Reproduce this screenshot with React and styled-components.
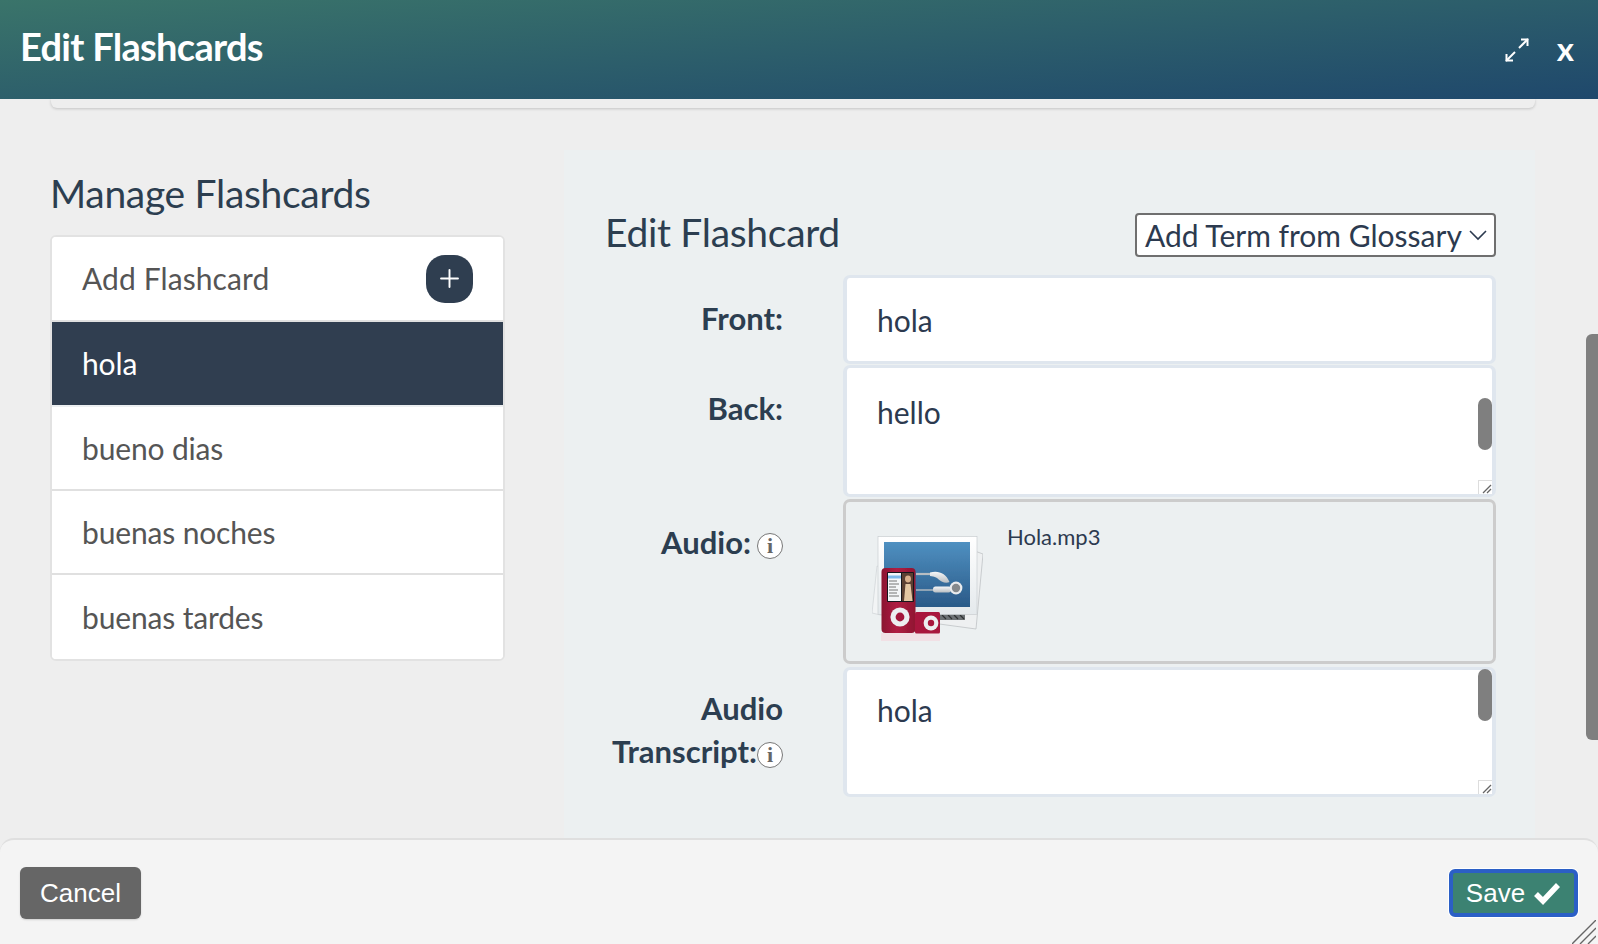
import styled, { createGlobalStyle } from 'styled-components';
import { Plus } from 'lucide-react';

const GlobalStyle = createGlobalStyle`
  html, body {
    margin: 0;
    height: 100%;
    overflow: hidden;
    background: #eeeeee;
    font-family: Lato, "Liberation Sans", sans-serif;
    color: #2c3a4f;
  }
  #root { height: 100%; }
  * { box-sizing: border-box; }
`;

const Modal = styled.div`
  position: relative;
  height: 100vh;
  display: flex;
  flex-direction: column;
  background: #eeeeee;
  overflow: hidden;
`;

const Header = styled.header`
  flex: 0 0 99px;
  display: flex;
  align-items: flex-start;
  justify-content: space-between;
  padding: 24px 24px 0 20px;
  background: linear-gradient(176deg, #3a746a 0%, #1f486c 100%);
  color: #fff;
`;

const Title = styled.h1`
  margin: 0;
  font-size: 38px;
  line-height: 44px;
  font-weight: 700;
  letter-spacing: -0.7px;
`;

const HeaderActions = styled.div`
  display: flex;
  align-items: flex-start;
  gap: 28px;
  padding-top: 14px;
`;

const CloseMark = styled.span`
  margin-top: -3px;
  font-size: 33px;
  font-weight: 700;
  line-height: 26px;
`;

const Body = styled.main`
  flex: 1;
  min-height: 0;
  overflow: hidden;
  padding: 0 63px 0 50px;
`;

const CardEdge = styled.div`
  height: 9px;
  margin-left: 1px;
  background: #eeeeee;
  border-radius: 0 0 6px 6px;
  box-shadow: 0 1px 3px rgba(0, 0, 0, 0.18);
`;

const Columns = styled.div`
  display: flex;
  align-items: flex-start;
  gap: 59px;
  margin-top: 42px;
`;

const LeftColumn = styled.section`
  flex: 0 0 455px;
`;

const SectionHeading = styled.h2`
  margin: 0;
  font-size: 39px;
  line-height: 45px;
  font-weight: 400;
  letter-spacing: -0.3px;
  color: #2c3e50;
`;

const ManageHeading = styled(SectionHeading)`
  margin: 21px 0 19px;
`;

const List = styled.ul`
  margin: 0;
  padding: 0;
  list-style: none;
  background: #fff;
  border: 2px solid #e2e2e2;
  border-radius: 6px;
  overflow: hidden;
`;

const Item = styled.li`
  height: ${p => p.$h}px;
  display: flex;
  align-items: center;
  justify-content: space-between;
  padding: 0 29px 0 30px;
  font-size: 30px;
  letter-spacing: -0.15px;
  color: #555;
  background: #fff;
  background-clip: padding-box;
  border-bottom: 2px solid #e0e0e0;

  &:last-child { border-bottom: 0; }
`;

const AddItem = styled(Item)`
  padding: 0 30px 2px 30px;
  letter-spacing: 0.1px;
`;

const ActiveItem = styled(Item)`
  padding-bottom: 2px;
  color: #fff;
  background: #303e50;
  border-bottom-color: #eceff1;
`;

const AddButton = styled.button`
  width: 47px;
  height: 48px;
  margin-top: 2px;
  border: 0;
  padding: 0;
  border-radius: 19px;
  display: flex;
  align-items: center;
  justify-content: center;
  background: #2f3e50;
  color: #fff;
`;

const EditPanel = styled.section`
  flex: 1;
  height: 700px;
  padding: 58px 39px 0 41px;
  background: #ecf0f1;
`;

const EditTop = styled.div`
  display: flex;
  align-items: center;
  justify-content: space-between;
  height: 48px;
  margin-bottom: 19px;
`;

const GlossarySelect = styled.div`
  width: 361px;
  height: 44px;
  margin-top: 6px;
  display: flex;
  align-items: center;
  justify-content: space-between;
  padding: 0 7px 0 8px;
  background: #fff;
  border: 2px solid #6f6f6f;
  border-radius: 4px;
  font-size: 30px;
  color: #2c3a4f;
  white-space: nowrap;
`;

const Row = styled.div`
  display: flex;
  gap: 60px;
  margin-top: ${p => p.$mt || 0}px;
`;

const Label = styled.div`
  flex: 0 0 178px;
  padding-top: ${p => p.$pt}px;
  text-align: right;
  font-size: 31px;
  line-height: 43px;
  font-weight: 700;
  color: #2c3e50;
`;

const LabelLine = styled.div`
  display: flex;
  align-items: center;
  justify-content: flex-end;
  gap: ${p => p.$gap || 0}px;
  white-space: nowrap;
`;

const InfoBadge = styled.span`
  flex: 0 0 26px;
  width: 26px;
  height: 26px;
  margin-top: 6px;
  display: inline-flex;
  align-items: center;
  justify-content: center;
  border: 1px solid #777;
  border-radius: 50%;
  background: #fff;
  font-family: "Liberation Serif", serif;
  font-size: 22px;
  font-weight: 700;
  line-height: 1;
  color: #666;
`;

const Field = styled.div`
  position: relative;
  flex: 1;
  height: ${p => p.$h}px;
  padding: ${p => p.$pt}px 30px 0;
  background: #fff;
  border: solid #dfe6ee;
  border-width: 3px 4px;
  border-radius: 7px;
  font-size: 30px;
  line-height: 44px;
  color: #2c3a4f;
`;

const ScrollThumb = styled.div`
  position: absolute;
  top: ${p => p.$top}px;
  right: 0;
  width: 14px;
  height: 52px;
  border-radius: 7px;
  background: #7f7f7f;
`;

const Resizer = styled.div`
  position: absolute;
  right: 0;
  bottom: 0;
  width: 14px;
  height: 14px;
  background: #fff;
  border: 1px solid #dddddd;
  border-width: 1px 0 0 1px;
  color: #666;
  display: flex;
`;

const AudioBox = styled.div`
  flex: 1;
  height: 165px;
  display: flex;
  align-items: flex-start;
  gap: 24px;
  padding: 21px 0 0 26px;
  background: #ecf0f1;
  border: 3px solid #cccccc;
  border-radius: 7px;
`;

const ArtSvg = styled.svg`
  flex: none;
  margin-top: 13px;
`;

const FileName = styled.span`
  font-size: 22px;
  line-height: 28px;
  color: #2c3a4f;
`;

const Footer = styled.footer`
  flex: 0 0 106px;
  display: flex;
  align-items: flex-start;
  justify-content: space-between;
  padding: 27px 20px 0 20px;
  background: #f4f4f4;
  border-top: 2px solid #dfdfdf;
  border-radius: 14px 14px 0 0;
`;

const CancelButton = styled.button`
  display: flex;
  align-items: center;
  justify-content: center;
  height: 52px;
  width: 121px;
  padding: 0;
  border: 0;
  border-radius: 6px;
  background: #666666;
  box-shadow: 0 1px 2px rgba(0, 0, 0, 0.15);
  color: #fff;
  font-family: "Liberation Sans", Arial, sans-serif;
  font-size: 26px;
`;

const SaveButton = styled(CancelButton)`
  gap: 8px;
  height: 48px;
  width: 129px;
  margin-top: 2px;
  border: 4px solid #2b5fc6;
  background: #3c8272;
  box-shadow: 0 0 0 1px #fff;
`;

const PageThumb = styled.div`
  position: absolute;
  top: 334px;
  right: 0;
  width: 12px;
  height: 406px;
  border-radius: 6px 0 0 6px;
  background: #7f7f7f;
`;

const GripLines = styled.svg`
  position: absolute;
  right: 2px;
  bottom: 0;
`;

const ExpandIcon = () => (
  <svg width="24" height="24" viewBox="0 0 24 24" fill="none" stroke="#fff" strokeWidth="2">
    <path d="M14 10 L23 1" />
    <path d="M16 1.5 H22.5 V8" />
    <path d="M10 14 L1 23" />
    <path d="M1.5 16 V22.5 H8" />
  </svg>
);

const Chevron = () => (
  <svg width="18" height="12" viewBox="0 0 18 12" fill="none" stroke="#2c3a4f" strokeWidth="1.6">
    <path d="M1 2 L9 10 L17 2" />
  </svg>
);

const ResizeMark = () => (
  <svg width="13" height="13" viewBox="0 0 13 13" fill="none" stroke="#666" strokeWidth="1.2">
    <path d="M4 12 L12 4" />
    <path d="M8 12 L12 8" />
  </svg>
);

const CheckMark = () => (
  <svg width="28" height="24" viewBox="0 0 28 24" fill="none" stroke="#fff" strokeWidth="5.5">
    <path d="M3 13 L10 20 L25 4" />
  </svg>
);

const AudioArt = () => (
  <ArtSvg width="111" height="105" viewBox="0 0 111 105">
    <defs>
      <linearGradient id="sky" x1="0" y1="0" x2="0" y2="1">
        <stop offset="0" stopColor="#4f90c1" />
        <stop offset="1" stopColor="#2a5a88" />
      </linearGradient>
      <linearGradient id="frame" x1="0" y1="0" x2="0" y2="1">
        <stop offset="0" stopColor="#ffffff" />
        <stop offset="1" stopColor="#e4e9ec" />
      </linearGradient>
      <linearGradient id="red" x1="0" y1="0" x2="1" y2="0">
        <stop offset="0" stopColor="#8a1230" />
        <stop offset="0.45" stopColor="#b01f44" />
        <stop offset="1" stopColor="#8f1431" />
      </linearGradient>
      <linearGradient id="bud" x1="0" y1="0" x2="0" y2="1">
        <stop offset="0" stopColor="#f6f7f8" />
        <stop offset="1" stopColor="#b9bec2" />
      </linearGradient>
      <filter id="soft">
        <feGaussianBlur stdDeviation="0.35" />
      </filter>
    </defs>
    <g filter="url(#soft)">
      <path d="M5 30 L0 77 L30 84 L30 40 Z" fill="#f2f4f5" stroke="#cfd3d5" strokeWidth="0.7" />
      <path d="M100 14 L111 18 L104 93 L60 87 L60 70 Z" fill="#eef0f1" stroke="#bfc3c5" strokeWidth="0.8" />
      <rect x="68" y="78" width="25" height="6" fill="#6d7275" />
      <path d="M70 79 L74 83 M76 79 L80 83 M82 79 L86 83 M88 79 L92 83" stroke="#2d3133" strokeWidth="1.2" />
      <rect x="6" y="0.5" width="99" height="78" fill="url(#frame)" stroke="#c9ced1" strokeWidth="0.7" />
      <rect x="12" y="6" width="86" height="65" fill="url(#sky)" />
      <path d="M44 38 H62" stroke="#b8bdc2" strokeWidth="2.2" />
      <path d="M58 36.5 C66 34 74 37 77.5 46 C74 48 69 46 65 42 C62 40 60 40.5 58 40 Z" fill="url(#bud)" />
      <path d="M44 54 H62" stroke="#b8bdc2" strokeWidth="1.4" />
      <rect x="61" y="50.5" width="18" height="6" rx="2.5" fill="url(#bud)" />
      <circle cx="84" cy="52" r="6.4" fill="#e9ebed" />
      <circle cx="84" cy="52" r="4.2" fill="#85898c" />
      <rect x="9" y="97" width="59" height="8" fill="#f3d8df" opacity="0.7" />
      <rect x="9.5" y="32" width="34" height="65" rx="4" fill="url(#red)" />
      <rect x="15" y="36" width="27" height="30" rx="1" fill="#15171a" />
      <rect x="16" y="37" width="13" height="28" fill="#f4f6f8" />
      <rect x="16" y="39.5" width="13" height="3" fill="#7db9ea" />
      <path d="M17 45 H25 M17 48 H27 M17 51 H24 M17 54 H26 M17 57 H25 M17 60 H27" stroke="#666" strokeWidth="0.9" />
      <rect x="30" y="37" width="11" height="28" fill="#5b3f33" />
      <ellipse cx="36" cy="43" rx="3" ry="3.4" fill="#d9b08c" />
      <path d="M32 65 L33.5 48 H38.5 L40.5 65 Z" fill="#e4c6a2" />
      <circle cx="28" cy="81" r="9.6" fill="#eceef0" />
      <circle cx="28" cy="81" r="4.4" fill="#a3173a" />
      <rect x="43" y="76" width="25" height="21.5" rx="1.5" fill="#a8193c" />
      <circle cx="59" cy="87" r="7.4" fill="#eceef0" />
      <circle cx="59" cy="87" r="3.2" fill="#a8193c" />
    </g>
  </ArtSvg>
);

export default function App() {
  return (
    <Modal>
      <GlobalStyle />
      <Header>
        <Title>Edit Flashcards</Title>
        <HeaderActions>
          <ExpandIcon />
          <CloseMark>x</CloseMark>
        </HeaderActions>
      </Header>

      <Body>
        <CardEdge />
        <Columns>
          <LeftColumn>
            <ManageHeading>Manage Flashcards</ManageHeading>
            <List>
              <AddItem $h={85}>
                Add Flashcard
                <AddButton aria-label="Add flashcard">
                  <Plus size={29} strokeWidth={1.6} />
                </AddButton>
              </AddItem>
              <ActiveItem $h={85}>hola</ActiveItem>
              <Item $h={84}>bueno dias</Item>
              <Item $h={84}>buenas noches</Item>
              <Item $h={84}>buenas tardes</Item>
            </List>
          </LeftColumn>

          <EditPanel>
            <EditTop>
              <SectionHeading>Edit Flashcard</SectionHeading>
              <GlossarySelect>
                Add Term from Glossary
                <Chevron />
              </GlossarySelect>
            </EditTop>

            <Row>
              <Label $pt={22}><LabelLine>Front:</LabelLine></Label>
              <Field $h={89} $pt={20}>hola</Field>
            </Row>
            <Row $mt={1}>
              <Label $pt={22}><LabelLine>Back:</LabelLine></Label>
              <Field $h={132} $pt={22}>
                hello
                <ScrollThumb $top={30} />
                <Resizer><ResizeMark /></Resizer>
              </Field>
            </Row>
            <Row $mt={2}>
              <Label $pt={22}>
                <LabelLine $gap={6}>Audio:<InfoBadge>i</InfoBadge></LabelLine>
              </Label>
              <AudioBox>
                <AudioArt />
                <FileName>Hola.mp3</FileName>
              </AudioBox>
            </Row>
            <Row $mt={3}>
              <Label $pt={20}>
                <LabelLine>Audio</LabelLine>
                <LabelLine>Transcript:<InfoBadge>i</InfoBadge></LabelLine>
              </Label>
              <Field $h={130} $pt={18}>
                hola
                <ScrollThumb $top={-1} />
                <Resizer><ResizeMark /></Resizer>
              </Field>
            </Row>
          </EditPanel>
        </Columns>
      </Body>

      <Footer>
        <CancelButton>Cancel</CancelButton>
        <SaveButton>Save <CheckMark /></SaveButton>
      </Footer>

      <PageThumb />
      <GripLines width="24" height="24" viewBox="0 0 24 24" fill="none" stroke="#666" strokeWidth="1.4">
        <path d="M0 24 L24 0 M8 24 L24 8 M16 24 L24 16" />
      </GripLines>
    </Modal>
  );
}
